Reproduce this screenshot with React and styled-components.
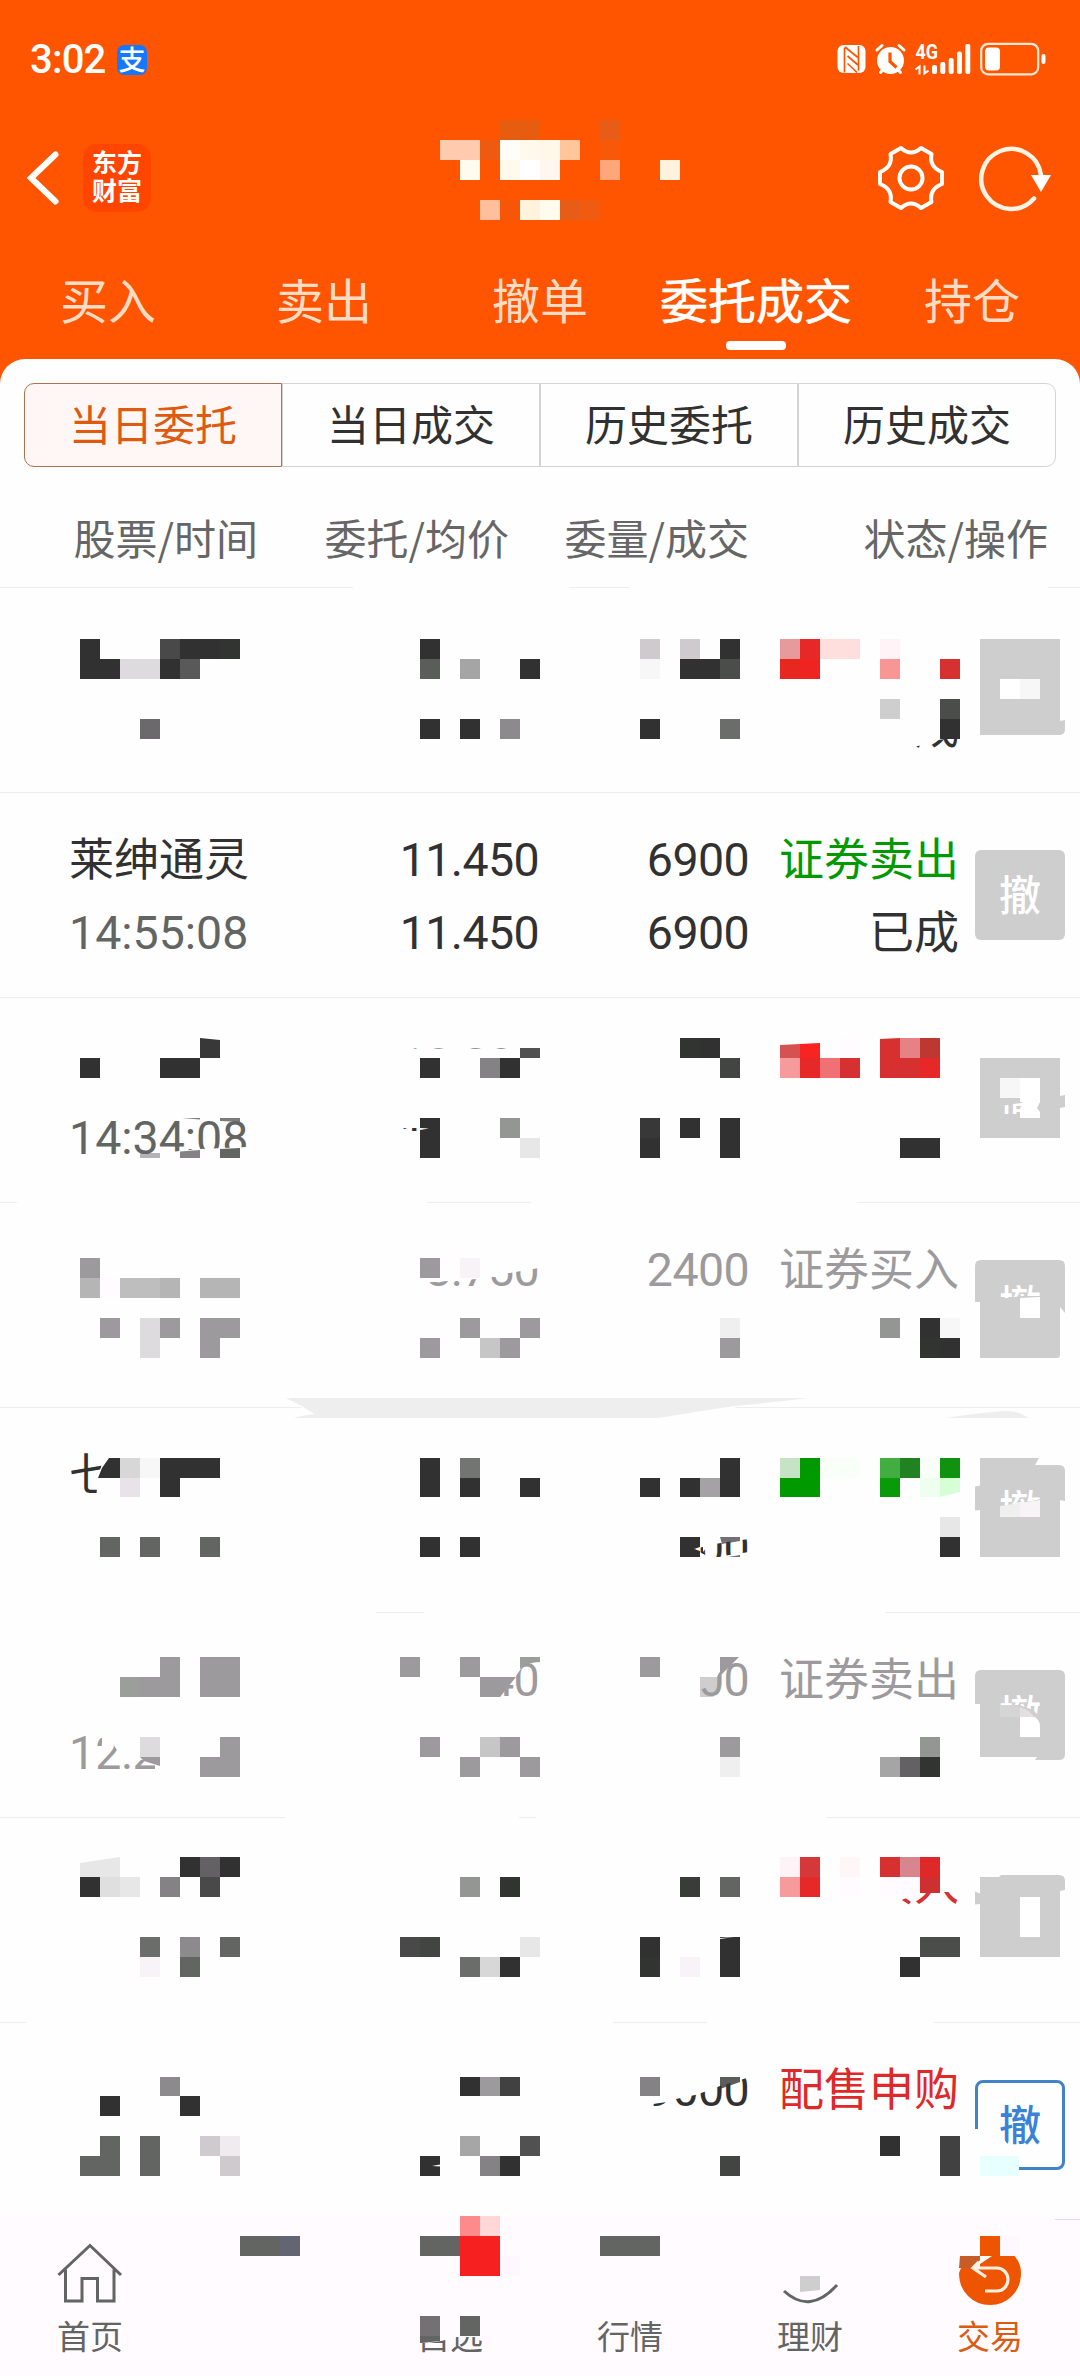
import React from "react";
import styled, { createGlobalStyle, css } from "styled-components";

const CJK = `"Noto Sans CJK SC", "Noto Sans", sans-serif`;
const NUM = `Roboto, "Noto Sans CJK SC", sans-serif`;

const DARK = "#313131";
const GRAY = "#636563";
const FADED = "#9c9a9c";
const RED = "#de2829";
const GREEN = "#009a00";

const GlobalStyle = createGlobalStyle`
  * {
    box-sizing: border-box;
  }
  body {
    margin: 0;
    font-family: ${CJK};
    color: ${DARK};
  }
`;

const Page = styled.div`
  display: flex;
  flex-direction: column;
  width: 1080px;
  height: 2376px;
  overflow: hidden;
  background: #ff5500;
`;

/* ---------- header ---------- */

const StatusBar = styled.div`
  display: flex;
  align-items: center;
  height: 119px;
  padding: 0 34px 0 30px;
`;

const Clock = styled.div`
  width: 87px;
  font-family: ${NUM};
  font-size: 40px;
  font-weight: 500;
  line-height: 40px;
  letter-spacing: -0.8px;
  color: #fff;
`;

const PayBadge = styled.div`
  width: 30px;
  height: 30px;
  border-radius: 7px;
  background: #1677ff;
  color: #fff;
  font-size: 27px;
  font-weight: 500;
  line-height: 28px;
  text-align: center;
`;

const StatusIcons = styled.svg`
  margin-left: auto;
  overflow: visible;
`;

const AppBar = styled.div`
  position: relative;
  display: flex;
  align-items: center;
  height: 117px;
  padding: 0 28px 0 26px;
`;

const Brand = styled.div`
  width: 68px;
  height: 68px;
  margin-left: 22px;
  padding-top: 3px;
  border-radius: 14px;
  background: #ff4500;
  color: #fff;
  font-size: 25px;
  font-weight: 700;
  line-height: 28px;
  text-align: center;
`;

const AppActions = styled.div`
  display: flex;
  gap: 34px;
  margin-left: auto;
`;

const Tabs = styled.div`
  display: grid;
  grid-template-columns: repeat(5, 1fr);
  height: 123px;
  padding-top: 26px;
`;

const Tab = styled.div`
  display: flex;
  flex-direction: column;
  align-items: center;
  font-size: 48px;
  line-height: 72px;
  color: ${({ $active }) => ($active ? "#fff" : "#ffdcc6")};
  -webkit-text-stroke: ${({ $active }) => ($active ? "0.6px #fff" : "0")};
  &::after {
    content: "";
    width: 60px;
    height: 9px;
    margin-top: 7px;
    border-radius: 4px;
    background: ${({ $active }) => ($active ? "#fff" : "transparent")};
  }
`;

/* ---------- order sheet ---------- */

const Sheet = styled.div`
  flex: 1;
  min-height: 0;
  overflow: hidden;
  padding-top: 24px;
  border-radius: 25px 25px 0 0;
  background: #fefefe;
`;

const Segments = styled.div`
  display: grid;
  grid-template-columns: repeat(4, 1fr);
  height: 84px;
  margin: 0 24px 24px;
`;

const Segment = styled.div`
  border: 1px solid #d3d3d6;
  font-size: 42px;
  line-height: 78px;
  text-align: center;
  &:first-child {
    border-radius: 10px 0 0 10px;
  }
  &:last-child {
    border-radius: 0 10px 10px 0;
  }
  ${({ $active }) =>
    $active &&
    css`
      border-color: #b0714f;
      background: #fff6f6;
      color: #dd5a10;
    `}
`;

const Columns = styled.div`
  display: grid;
  grid-template-columns: 258px 251px 240px 299px;
  height: 96px;
  font-size: 42px;
  line-height: 91px;
  white-space: nowrap;
  color: #666;
  & > div {
    text-align: right;
  }
`;

// Hairline that can be broken into several pieces
const Rule = styled.div`
  height: 1px;
  background: ${({ $parts }) =>
    $parts
      .map(
        ([from, to]) =>
          `linear-gradient(#eee, #eee) ${from}px 0 / ${to - from}px 1px no-repeat`
      )
      .join(", ")};
`;

const Row = styled.div`
  position: relative;
  display: grid;
  grid-template-columns: 200px 270px 210px 210px 90px;
  height: 204px;
  padding: 30px 0 0 69px;
`;

const Cell = styled.div`
  position: relative;
  text-align: ${({ $left }) => ($left ? "left" : "right")};
  letter-spacing: ${({ $tight }) => ($tight ? "-0.6px" : "normal")};
`;

const Line = styled.div`
  height: 73px;
  font-size: 45px;
  line-height: 68px;
  white-space: nowrap;
  color: ${({ $color }) => $color || DARK};
  clip-path: ${({ $clip }) => ($clip ? `polygon(${$clip})` : "none")};
  ${({ $num }) =>
    $num &&
    css`
      font-family: ${NUM};
      font-size: 46.5px;
      line-height: 74px;
    `}
`;

const CancelButton = styled.div`
  position: relative;
  width: 90px;
  height: 90px;
  margin: 27px 0 0 16px;
  border-radius: 6px;
  background: #cecece;
  color: #fff;
  font-size: 42px;
  font-weight: 500;
  line-height: 86px;
  text-align: center;
  clip-path: ${({ $clip }) => ($clip ? `polygon(${$clip})` : "none")};
  ${({ $kind }) =>
    $kind === "ghost" &&
    css`
      background: transparent;
    `}
  ${({ $kind }) =>
    $kind === "active" &&
    css`
      border: 3px solid #4282c6;
      border-radius: 8px;
      background: transparent;
      color: #3982d6;
      line-height: 80px;
    `}
`;

/* ---------- bottom bar ---------- */

const NavBar = styled.div`
  position: relative;
  display: grid;
  grid-template-columns: repeat(6, 1fr);
  height: 160px;
  background: #fffbff;
`;

const NavItem = styled.div`
  display: flex;
  flex-direction: column;
  align-items: center;
  color: ${({ $active }) => ($active ? "#d95b14" : GRAY)};
`;

const NavIcon = styled.svg`
  position: relative;
  margin-top: 20px;
`;

const NavLabel = styled.div`
  position: relative;
  height: 48px;
  margin-top: 10px;
  font-size: 33px;
  line-height: 46px;
  clip-path: ${({ $clip }) => ($clip ? `polygon(${$clip})` : "none")};
`;

/* ---------- privacy mosaic ---------- */

const MosaicLayer = styled.svg`
  position: absolute;
  top: 0;
  left: 0;
  overflow: visible;
  pointer-events: none;
`;

const UNIT = 2376 / 119;
const lineY = (k) => Math.round(k * UNIT);

// cells: [row, first column, colours...], one colour per 20px column
const Mosaic = ({ top, height, cells = [], children }) => (
  <MosaicLayer width="1080" height={height} viewBox={`0 ${top} 1080 ${height}`}>
    <g shapeRendering="crispEdges">
      {cells.map(([k, col, ...colors]) =>
        colors.map(
          (color, i) =>
            color && (
              <rect
                key={`${k}-${col + i}`}
                x={(col + i) * 20}
                y={lineY(k)}
                width="20"
                height={lineY(k + 1) - lineY(k)}
                fill={color}
              />
            )
        )
      )}
    </g>
    {children}
  </MosaicLayer>
);

const D = DARK;
const G = GRAY;
const F = FADED;

const titleCells = [
  [6, 25, "#e75d10", "#e75d10"],
  [6, 30, "#e75d18"],
  [7, 22, "#ffcaad", "#ffcaad", "#ef5910", "#fffdf8", "#fffaec", "#fff7e7", "#ffc69c"],
  [7, 30, "#f75908"],
  [8, 23, "#fffbef", null, "#fffaec", "#ffffff", "#fff6ef"],
  [8, 30, "#ffa67b"],
  [8, 33, "#fff3de"],
  [10, 24, "#ffbe9c", "#f75508", "#fff3de", "#fffbef", "#e75d18", "#ef5b10"],
];

const ALL = [[0, 1080]];

const rows = [
  {
    status: {
      text: "已成",
      clip: "149px 58px, 175px 54px, 189px 49px, 211px 46px, 211px 60px, 149px 60px",
    },
    cells: [
      [32, 4, D, null, null, null, "#4a494a", D, D, "#313431"],
      [33, 4, D, D, "#dedbde", "#dedbde", D, "#5a595a"],
      [36, 7, "#6b696b"],
      [32, 21, D],
      [33, 21, "#5a5d5a", null, "#a5a5a5", null, null, D],
      [36, 21, D, null, D, null, "#8c8a8c"],
      [32, 32, "#cecace", null, "#cecace", null, D],
      [33, 32, "#f7f7f7", null, D, D, "#4a4d4a"],
      [36, 32, D, null, null, null, "#6b6d6b"],
      [32, 39, "#e79a9c", "#e72829", "#ffdfde", "#ffdfde", null, "#fff3f7"],
      [33, 39, "#e72821", "#ef2421", null, null, null, "#f79694", null, null, "#d63031"],
      [35, 44, "#cecece", null, null, "#4a4d4a"],
      [36, 47, D],
    ],
    art: (
      <>
        <path d="M980 639h80v82l5-1v9q0 6-6 6h-79z" fill="#cecece" />
        <path d="M1000 679h20v20h-20z" fill="#fff" />
        <path d="M1020 679h20v20h-20z" fill="#f7f7f7" />
      </>
    ),
    rule: ALL,
  },
  {
    name: { text: "莱绅通灵" },
    time: { text: "14:55:08", color: GRAY },
    price: { text: "11.450" },
    avg: { text: "11.450" },
    qty: { text: "6900" },
    done: { text: "6900" },
    type: { text: "证券卖出", color: GREEN },
    status: { text: "已成" },
    button: { kind: "solid" },
    rule: ALL,
  },
  {
    time: {
      text: "14:34:08",
      color: GRAY,
      clip: "0 0, 200px 0, 200px 46px, 178px 46px, 131px 48px, 111px 50px, 91px 52px, 0 60px",
    },
    price: { text: "10.280", clip: "0 18px, 250px 18px, 250px 20.5px, 0 20.5px" },
    avg: { text: "11.280", clip: "134px 27px, 152px 27px, 152px 30px, 134px 30px" },
    button: {
      kind: "ghost",
      clip: "20px 52px, 45px 48px, 68px 42px, 68px 56px, 50px 59px, 20px 59px",
    },
    cells: [
      [53, 4, D, null, null, null, D, D],
      [53, 21, D, null, null, "#848284", D],
      [56, 21, D, null, null, null, "#949694"],
      [57, 21, D, null, null, null, null, "#e7e7e7"],
      [52, 34, "#313431", D],
      [53, 36, "#424542"],
      [56, 32, "#393839", null, D, null, D],
      [57, 32, D, null, null, null, D],
      [52, 42, "#fffbff", null, null, "#e78284", "#bd3831"],
      [53, 39, "#f79a9c", "#e72829", "#ef7173", "#d63031", null, "#d63031", "#d63031", "#e72829"],
      [57, 45, D, D],
    ],
    art: (
      <>
        <path d="M200 1038l20 2v18h-20z" fill="#393839" />
        <path d="M520 1048h20v10h-20z" fill="#525152" />
        <path d="M182 1118h18v1.5zM220 1118h20v4l-20-1z" fill="#7b7d7b" />
        <path d="M140 1153l20 0v5h-20z" fill="#b5b2b5" />
        <path d="M180 1151.5l20-1.500v8h-20z" fill="#848284" />
        <path d="M220 1149l20-1v10h-20z" fill={G} />
        <path d="M420 1128l9 .6-9 1.400z" fill="#fff" />
        <path d="M780 1045l20-1v14h-20z" fill="#d65152" />
        <path d="M800 1044l20-1v15h-20z" fill="#f72421" />
        <path d="M880 1039l20-1v20h-20z" fill="#d63031" />
        <path d="M980 1058h80v38l5-1v12l-5 1v30h-80z" fill="#cecece" />
        <path d="M1000 1078h20v20h-20z" fill="#f7f7f7" />
        <path d="M1020 1078h20v24l-3 6 3 4v6h-20v-10l5-6h-5z" fill="#fff" />
      </>
    ),
    rule: [[0, 17], [427, 531], [857, 1080]],
  },
  {
    price: {
      text: "8.750",
      color: FADED,
      clip: "150px 50px, 208px 46px, 222px 43px, 270px 35px, 270px 70px, 150px 70px",
    },
    qty: { text: "2400", color: FADED },
    type: { text: "证券买入", color: FADED },
    button: { kind: "ghost", clip: "0 0, 90px 0, 90px 36px, 46px 36px, 24px 39px, 0 39px" },
    cells: [
      [63, 4, F],
      [64, 4, "#b5b5b5", "#fffbff", "#bdbebd", "#bdbebd", "#b5b5b5", null, "#b5b5b5", "#b5b5b5"],
      [66, 5, F, null, "#dedbde", F, null, F, F],
      [67, 7, "#dedbde", null, null, F],
      [63, 21, F, null, "#f7f3f7"],
      [66, 23, F, null, null, F],
      [67, 21, F, null, null, "#c6c6c6", F],
      [66, 36, "#efefef"],
      [67, 36, F],
      [66, 44, "#949694", null, D, "#f7f7f7"],
      [67, 46, "#313431", D],
    ],
    art: (
      <>
        <path
          d="M981 1260h78q6 0 6 6v47l-5-6v48q0 3-3 3h-77v-56h-5v-36q0-6 6-6z"
          fill="#cecece"
        />
        <path d="M1020 1298l20-1v21h-20z" fill="#fff" />
      </>
    ),
    rule: [[0, 301], [735, 1080]],
  },
  {
    name: { text: "七", clip: "0 0, 42px 0, 33px 26px, 29px 38px, 26px 73px, 0 73px" },
    done: {
      text: "2900",
      clip: "155px 38px, 164px 36px, 164px 41px, 170px 34px, 188px 31px, 210px 28px, 210px 41px, 190px 44px, 180px 46px, 170px 46px",
    },
    button: { kind: "ghost", clip: "0 0, 90px 0, 90px 34px, 66px 34px, 46px 38px, 24px 41px, 0 41px" },
    cells: [
      [73, 6, "#d6d7d6", "#f7f7f7", D, D, D],
      [74, 6, "#e7e3e7", null, D],
      [77, 5, G, null, G, null, null, G],
      [73, 21, D, null, "#737573"],
      [74, 21, D, null, D, null, null, D],
      [77, 21, D, null, D],
      [73, 36, D],
      [74, 32, D, null, D, "#a5a2a5", D],
      [77, 34, D],
      [73, 39, "#c6e3c6", GREEN, "#f7fff7", "#f7fff7", null, "#42ae42", "#218221", "#f7fff7", "#109210"],
      [74, 39, GREEN, GREEN, null, null, null, "#089a08", null, "#efffef"],
      [76, 47, "#e7e7e7"],
      [77, 47, D],
    ],
    art: (
      <>
        <path
          d="M285.500 1398h523q-40 5-74 8q-40 6-76 12h-365q10-3 21-4q-15-10-29-16z"
          fill="#eee"
        />
        <path d="M946 1418q30-5 58-7q14-1 25 7z" fill="#eee" />
        <path d="M109 1458h11v20h-22l4-10z" fill={D} />
        <path d="M940 1478h20v14l-20 5z" fill="#d6ffd6" />
        <path d="M694 1549l6-2v4z" fill="#fff" />
        <path d="M720 1537h20v4l-18 3zM728 1557l12-2v2z" fill="#736f73" />
        <path
          d="M980 1458h59l-4 7h24q6 0 6 6v30l-5-1v57h-80v-47l-5 .5v-24l5-1z"
          fill="#cecece"
        />
        <path d="M1000 1506l20-3v14h-20z" fill="#efefef" />
        <path d="M1020 1503l20-3v17h-20z" fill="#f7f3f7" />
      </>
    ),
    rule: [[376, 424], [885, 1080]],
  },
  {
    time: {
      text: "12:22",
      color: FADED,
      clip: "0 0, 24px 0, 24px 22px, 33px 22px, 33px 34px, 44px 28px, 52px 40px, 64px 42px, 74px 44px, 86px 43px, 86px 60px, 0 60px",
    },
    price: {
      text: "14.340",
      color: FADED,
      clip: "231px 60px, 231px 54px, 249px 30px, 256px 20px, 270px 18px, 270px 60px",
    },
    qty: {
      text: "2000",
      color: FADED,
      clip: "161px 57px, 161px 47px, 173px 42px, 180px 30px, 191px 20px, 200px 14px, 210px 14px, 210px 57px",
    },
    type: { text: "证券卖出", color: FADED },
    button: {
      kind: "ghost",
      clip: "0 0, 90px 0, 90px 48px, 66px 48px, 58px 40px, 44px 35px, 24px 35px, 0 34px",
    },
    cells: [
      [83, 8, F, null, F, F],
      [84, 6, "#9c9e9c", F, F, null, F, F],
      [87, 7, "#dedbde", null, null, null, F],
      [88, 10, F, F],
      [83, 20, F, null, null, F],
      [84, 24, F],
      [87, 21, F, null, null, "#c6c6c6", F],
      [88, 23, F, null, null, F],
      [83, 32, F],
      [87, 36, F],
      [88, 36, "#efefef"],
      [87, 46, "#949694"],
      [88, 44, "#a5a5a5", "#636163", "#313431"],
    ],
    art: (
      <>
        <path d="M140 1757h20v9l-16-5z" fill={F} />
        <path d="M500 1677h16l-16 20z" fill={F} />
        <path d="M520 1657h20v5q-12 0-20 7z" fill="#9c9e9c" />
        <path d="M720 1657h19l-16 16-3 3z" fill={F} />
        <path d="M700 1677h20v14l-7 6h-13z" fill="#cecece" />
        <path
          d="M981 1670h78q6 0 6 6v78q0 6-6 6h-24l2-3h-57v-53h-5v-28q0-6 6-6z"
          fill="#cecece"
        />
        <path d="M1000 1704q11 0 20 3v10h-20z" fill="#d6d5d6" />
        <path d="M1020 1707q10 3 14 10h-14z" fill="#e3dfe3" />
        <path d="M1020 1717h15q5 4 5 9v11h-20z" fill="#fff" />
      </>
    ),
    rule: [[0, 285], [519, 536], [826, 1080]],
  },
  {
    type: {
      text: "证券买入",
      color: "#d63031",
      clip: "126px 57px, 150px 53px, 165px 47px, 180px 44px, 210px 44px, 210px 62px, 126px 62px",
    },
    cells: [
      [93, 9, D, "#636163", D],
      [94, 4, D, "#dedfde", "#e7e7e7", null, "#848284", null, "#4a494a"],
      [97, 7, "#6b6d6b", null, "#8c8a8c", null, G],
      [98, 7, "#f7f3f7", null, G],
      [94, 23, "#949694", null, "#313431"],
      [97, 20, "#4a494a", "#424542", null, null, null, null, "#e7e7e7"],
      [98, 23, "#6b6d6b", "#d6d7d6", D],
      [94, 34, "#393c39", null, G],
      [97, 32, D, null, null, null, D],
      [98, 32, "#313431", null, "#f7f3f7", null, D],
      [93, 39, "#fff3f7", "#d63839", null, "#fff7f7", null, "#d63031", "#d6868c", RED],
      [94, 39, "#f79a9c", "#e72829", null, "#fffbff", null, "#fffbff", "#fffbff"],
      [97, 46, "#4a4d4a", "#4a4d4a"],
      [98, 45, D],
    ],
    art: (
      <>
        <path d="M80 1863l40-6v20h-40z" fill="#e7e7e7" />
        <path d="M720 1938l14-1-14 2z" fill="#fff" />
        <path d="M920 1877h20v16h-20z" fill="#ce3031" />
        <path
          d="M980 1877h19l2-2h58q6 0 6 6v9l-5 1v66h-80v-53l-5 .5v-13l5 2z"
          fill="#cecece"
        />
        <path d="M1020 1897h20v40h-20z" fill="#fff" />
      </>
    ),
    rule: [[0, 26], [613, 707], [934, 1080]],
  },
  {
    qty: {
      text: "9000",
      clip: "114px 51px, 128px 49px, 137px 46px, 156px 42px, 165px 39px, 181px 33px, 199px 28px, 210px 24px, 210px 60px, 114px 60px",
    },
    type: { text: "配售申购", color: RED },
    button: {
      kind: "active",
      clip: "0 0, 100% 0, 100% 100%, 44px 100%, 44px 78px, 34px 66px, 28px 58px, 20px 49px, 0 49px",
    },
    cells: [
      [104, 8, "#8c8a8c"],
      [105, 5, D, null, null, null, D],
      [107, 5, G, null, G, null, null, "#cecace", "#efebef"],
      [108, 4, G, G, null, G, null, null, null, "#cecace"],
      [104, 23, D, F, "#424142"],
      [107, 23, "#a5a6a5", null, null, "#525152"],
      [108, 21, D, null, null, "#848284", D],
      [104, 32, "#848284"],
      [108, 36, "#424542"],
      [107, 44, D, null, null, "#424142"],
      [108, 47, "#424142"],
    ],
    art: (
      <>
        <path d="M432 2166l8-1.500v2z" fill="#fff" />
        <path d="M720 2077h20v5l-20 7z" fill="#5a5d5a" />
        <path d="M980 2156h39v20h-39z" fill="#e7ffff" />
      </>
    ),
    rule: [],
  },
];

const navCells = [
  [111, 23, "#ff8a8c", "#ffd7d6"],
  [112, 12, G, G, "#636573"],
  [112, 21, G, G, "#f72021", "#f72021"],
  [113, 23, "#f72021", "#f72021", "#fff7ff"],
  [112, 30, G, G, G],
  [116, 21, "#737173", null, G],
  [112, 50, "#fff7ff"],
];

const Value = ({ data, num }) => (
  <Line $num={num} $color={data?.color} $clip={data?.clip}>
    {data?.text}
  </Line>
);

const OrderRow = ({ row, top }) => (
  <>
    <Row>
      <Mosaic top={top} height={204} cells={row.cells}>
        {row.art}
      </Mosaic>
      <Cell $left>
        <Value data={row.name} />
        <Value data={row.time} num />
      </Cell>
      <Cell $tight>
        <Value data={row.price} num />
        <Value data={row.avg} num />
      </Cell>
      <Cell $tight>
        <Value data={row.qty} num />
        <Value data={row.done} num />
      </Cell>
      <Cell>
        <Value data={row.type} />
        <Value data={row.status} />
      </Cell>
      {row.button && (
        <CancelButton $kind={row.button.kind} $clip={row.button.clip}>
          撤
        </CancelButton>
      )}
    </Row>
    <Rule $parts={row.rule} />
  </>
);

const SystemIcons = () => (
  <StatusIcons width="209" height="34" viewBox="837 43 209 34" fill="#fff">
    {/* NFC */}
    <rect x="837.500" y="45" width="28" height="28" rx="6" />
    <path
      d="M844.500 47.500v25M858.500 46v24.500M845 47l13.500 11M847.500 56l10.500 9M847.500 63.500l9.500 9"
      stroke="#ff5500"
      strokeWidth="1.700"
      fill="none"
    />
    {/* alarm */}
    <circle cx="890.500" cy="60.500" r="13.500" />
    <path
      d="M877 50l5-4.500M904 50l-5-4.500M880.500 72.500l4-4.500M900.500 72.500l-4-4.500"
      stroke="#fff"
      strokeWidth="3"
      strokeLinecap="round"
    />
    <path d="M890 52.500v9l6.500 6" stroke="#ff5500" strokeWidth="3.200" fill="none" />
    {/* mobile network */}
    <text
      x="915.500"
      y="59"
      fontFamily="Roboto, sans-serif"
      fontSize="19.500"
      fontWeight="700"
      textLength="22.500"
      lengthAdjust="spacingAndGlyphs"
    >
      4G
    </text>
    <path
      d="M915.500 69.500l4-3v8M924.500 65.500v8l4-3"
      stroke="#fff"
      strokeWidth="2"
      fill="none"
    />
    <rect x="932" y="65" width="5" height="9" rx="2" />
    <rect x="940.300" y="62" width="5" height="12" rx="2" />
    <rect x="948.700" y="58" width="5" height="16" rx="2" />
    <rect x="957" y="51.500" width="5" height="22.500" rx="2" />
    <rect x="965.300" y="44" width="5" height="30" rx="2" />
    {/* battery */}
    <rect
      x="981.200"
      y="43.800"
      width="57"
      height="30.500"
      rx="7"
      fill="none"
      stroke="#ffe9d6"
      strokeWidth="2.200"
    />
    <rect x="985" y="47.500" width="15" height="23" rx="4" />
    <rect x="1041.500" y="54" width="4" height="10" rx="2" />
  </StatusIcons>
);

const navItems = [
  {
    label: "首页",
    icon: (
      <path
        d="M1.500 31L33 1.500L64 31M8.500 25.500V57H25V34.500H40.500V57H57V25.500"
        fill="none"
        stroke={GRAY}
        strokeWidth="3"
      />
    ),
  },
  { label: "" },
  { label: "自选", clip: "0 31px, 12px 31px, 24px 29px, 40px 25px, 66px 25px, 66px 48px, 0 48px" },
  { label: "行情" },
  {
    label: "理财",
    icon: (
      <>
        <path d="M7 47Q33 71 60 41" fill="none" stroke={GRAY} strokeWidth="3" />
        <path d="M23 32h20v14l-20 2z" fill="#cecece" />
      </>
    ),
  },
  {
    label: "交易",
    active: true,
    icon: (
      <>
        <path
          d="M23-8h20v12h5q16 10 16 25q0 14-9 23t-22 9t-22-9t-9-23l2-5h19z"
          fill="#ed5500"
        />
        <path d="M3 12h20v4l-7 8h-14z" fill="#c65d29" />
        <path d="M23 12h12l-12 8z" fill="#fff" />
        <path
          d="M22 18l-6 6l13 9M17 24h23a11 11.500 0 0 1 0 23h-12"
          fill="none"
          stroke="#ffefe0"
          strokeWidth="3.200"
        />
      </>
    ),
  },
];

const App = () => {
  return (
    <Page>
      <GlobalStyle />
      <StatusBar>
        <Clock>3:02</Clock>
        <PayBadge>支</PayBadge>
        <SystemIcons />
      </StatusBar>
      <AppBar>
        <Mosaic top={119} height={117} cells={titleCells} />
        <svg width="35" height="56" viewBox="0 0 35 56">
          <path
            d="M29.500 4.500L5 28l24.500 23.500"
            fill="none"
            stroke="#fff"
            strokeWidth="6"
            strokeLinecap="round"
          />
        </svg>
        <Brand>东方财富</Brand>
        <AppActions>
          <svg width="68" height="68" viewBox="-34 -34 68 68">
            <path
              d="M-10-30Q0-21 10-30L20.500-24Q18-11 31-6V6Q18 11 20.500 24L10 30Q0 21-10 30L-20.500 24Q-18 11-31 6V-6Q-18-11-20.500-24Z"
              fill="none"
              stroke="#fff"
              strokeWidth="4"
              strokeLinejoin="round"
            />
            <circle r="11.500" fill="none" stroke="#fff" strokeWidth="4" />
          </svg>
          <svg width="73" height="68" viewBox="-32 -34 73 68">
            <path
              d="M23 20.500A30 30 0 1 1 30-3"
              fill="none"
              stroke="#fff3e6"
              strokeWidth="4.500"
              strokeLinecap="round"
            />
            <path d="M20-3h20L30 14z" fill="#fff" />
          </svg>
        </AppActions>
      </AppBar>
      <Tabs>
        <Tab>买入</Tab>
        <Tab>卖出</Tab>
        <Tab>撤单</Tab>
        <Tab $active>委托成交</Tab>
        <Tab>持仓</Tab>
      </Tabs>
      <Sheet>
        <Segments>
          <Segment $active>当日委托</Segment>
          <Segment>当日成交</Segment>
          <Segment>历史委托</Segment>
          <Segment>历史成交</Segment>
        </Segments>
        <Columns>
          <div>股票/时间</div>
          <div>委托/均价</div>
          <div>委量/成交</div>
          <div>状态/操作</div>
        </Columns>
        <Rule $parts={[[0, 353], [569, 629], [1048, 1080]]} />
        {rows.map((row, i) => (
          <OrderRow key={i} row={row} top={588 + i * 205} />
        ))}
      </Sheet>
      <NavBar>
        {navItems.map(({ label, icon, active, clip }, i) => (
          <NavItem key={i} $active={active}>
            <NavIcon width="66" height="66" viewBox="0 -8 66 66" overflow="visible">
              {icon}
            </NavIcon>
            <NavLabel $clip={clip}>{label}</NavLabel>
          </NavItem>
        ))}
        <Mosaic top={2216} height={160} cells={navCells}>
          <path d="M420 2336h20v5l-18 2h-2z" fill={GRAY} />
          <path d="M1055 2219h25v1h-25z" fill="#ddd" />
        </Mosaic>
      </NavBar>
    </Page>
  );
};

export default App;
